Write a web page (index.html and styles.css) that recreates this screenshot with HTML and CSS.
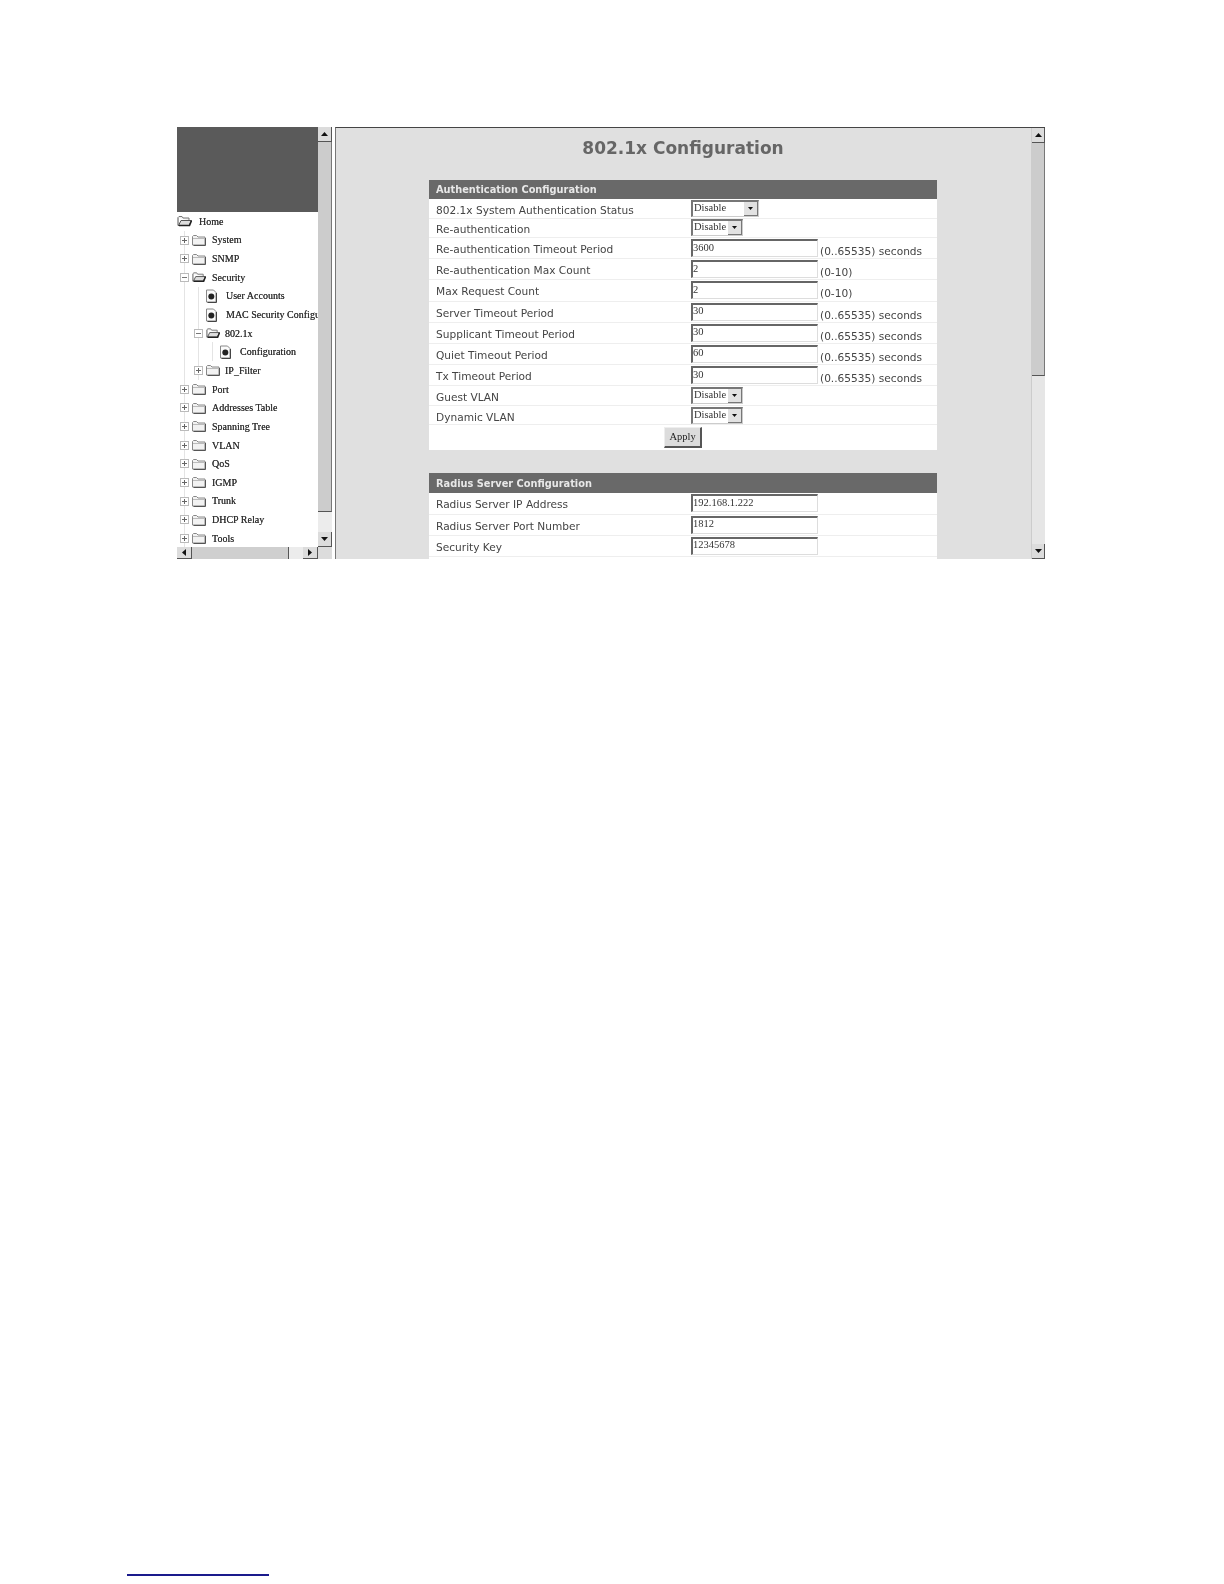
FILE: index.html
```html
<!DOCTYPE html>
<html>
	<head>
		<meta charset="UTF-8">
		<title>802.1x Configuration</title>
		<link rel="stylesheet" href="styles.css">
	</head>
	<body>
		<svg class="defs" xmlns="http://www.w3.org/2000/svg">
			<symbol id="folder" viewBox="0 0 14 12">
				<path d="M.5 2.500l1-1h3l1.500 1.500h7v8h-12.500z" fill="#f2f2f2" stroke="#888"/>
				<path d="M1 4.500h12" stroke="#bbb"/>
				<path d="M13.500 4v7.500h-12" fill="none" stroke="#555"/>
			</symbol>
			<symbol id="folder-open" viewBox="0 0 15 12">
				<path d="M1 2.500l1-1h3l1 1.500h6v2.500" fill="#eee" stroke="#777"/>
				<path d="M1 2.500v8h11l2.500-5h-10.500l-2.500 5" fill="#ddd" stroke="#555"/>
				<path d="M2 10.500h10.500l2-5" fill="none" stroke="#222" stroke-width="1.600"/>
			</symbol>
			<symbol id="page" viewBox="0 0 13 14">
				<path d="M1.500 1h7l2.500 2.500v9.500h-9.500z" fill="#fafafa" stroke="#888"/>
				<circle cx="6.300" cy="7.500" r="3" fill="#222"/>
				<path d="M11.500 4v9.500h-9" fill="none" stroke="#444"/>
			</symbol>
			<symbol id="plus" viewBox="0 0 9 9">
				<rect x=".5" y=".5" width="8" height="8" fill="#fff" stroke="#bbb"/>
				<path d="M2 4.500h5M4.500 2v5" stroke="#666"/>
			</symbol>
			<symbol id="minus" viewBox="0 0 9 9">
				<rect x=".5" y=".5" width="8" height="8" fill="#fff" stroke="#bbb"/>
				<path d="M2 4.500h5" stroke="#777"/>
			</symbol>
			<symbol id="arrow-up" viewBox="0 0 7 4"><path d="M3.500 0l3.500 4h-7z" fill="#111"/></symbol>
			<symbol id="arrow-down" viewBox="0 0 7 4"><path d="M0 0h7l-3.500 4z" fill="#111"/></symbol>
			<symbol id="arrow-left" viewBox="0 0 4 7"><path d="M4 0v7l-4-3.500z" fill="#111"/></symbol>
			<symbol id="arrow-right" viewBox="0 0 4 7"><path d="M0 0v7l4-3.500z" fill="#111"/></symbol>
		</svg>

		<div class="frame">
			<!--left-->
			<div class="left">
				<div class="left-top">
					<div class="left-main">
						<div class="banner"></div>
						<div class="tree">
							<div class="node"><svg class="ico-open home-ico"><use href="#folder-open"/></svg><span class="home-label">Home</span></div>
							<div class="node"><span class="cell line"><svg class="box"><use href="#plus"/></svg></span><svg class="ico"><use href="#folder"/></svg><span class="label">System</span></div>
							<div class="node"><span class="cell line"><svg class="box"><use href="#plus"/></svg></span><svg class="ico"><use href="#folder"/></svg><span class="label">SNMP</span></div>
							<div class="node"><span class="cell line"><svg class="box"><use href="#minus"/></svg></span><svg class="ico"><use href="#folder-open"/></svg><span class="label">Security</span></div>
							<div class="node"><span class="cell line"></span><span class="cell line"></span><svg class="doc"><use href="#page"/></svg><span class="label doc-label">User Accounts</span></div>
							<div class="node"><span class="cell line"></span><span class="cell line"></span><svg class="doc"><use href="#page"/></svg><span class="label doc-label">MAC Security Configuration</span></div>
							<div class="node"><span class="cell line"></span><span class="cell line"><svg class="box"><use href="#minus"/></svg></span><svg class="ico"><use href="#folder-open"/></svg><span class="label sub-label">802.1x</span></div>
							<div class="node"><span class="cell line"></span><span class="cell line"></span><span class="cell line"></span><svg class="doc"><use href="#page"/></svg><span class="label doc-label">Configuration</span></div>
							<div class="node"><span class="cell line"></span><span class="cell line"><svg class="box"><use href="#plus"/></svg></span><svg class="ico"><use href="#folder"/></svg><span class="label sub-label">IP_Filter</span></div>
							<div class="node"><span class="cell line"><svg class="box"><use href="#plus"/></svg></span><svg class="ico"><use href="#folder"/></svg><span class="label">Port</span></div>
							<div class="node"><span class="cell line"><svg class="box"><use href="#plus"/></svg></span><svg class="ico"><use href="#folder"/></svg><span class="label">Addresses Table</span></div>
							<div class="node"><span class="cell line"><svg class="box"><use href="#plus"/></svg></span><svg class="ico"><use href="#folder"/></svg><span class="label">Spanning Tree</span></div>
							<div class="node"><span class="cell line"><svg class="box"><use href="#plus"/></svg></span><svg class="ico"><use href="#folder"/></svg><span class="label">VLAN</span></div>
							<div class="node"><span class="cell line"><svg class="box"><use href="#plus"/></svg></span><svg class="ico"><use href="#folder"/></svg><span class="label">QoS</span></div>
							<div class="node"><span class="cell line"><svg class="box"><use href="#plus"/></svg></span><svg class="ico"><use href="#folder"/></svg><span class="label">IGMP</span></div>
							<div class="node"><span class="cell line"><svg class="box"><use href="#plus"/></svg></span><svg class="ico"><use href="#folder"/></svg><span class="label">Trunk</span></div>
							<div class="node"><span class="cell line"><svg class="box"><use href="#plus"/></svg></span><svg class="ico"><use href="#folder"/></svg><span class="label">DHCP Relay</span></div>
							<div class="node"><span class="cell line"><svg class="box"><use href="#plus"/></svg></span><svg class="ico"><use href="#folder"/></svg><span class="label">Tools</span></div>
						</div>
					</div>
					<div class="vbar vbar-left">
						<div class="sb-btn"><svg class="arrow-v"><use href="#arrow-up"/></svg></div>
						<div class="sb-thumb"></div>
						<div class="sb-track"></div>
						<div class="sb-btn"><svg class="arrow-v"><use href="#arrow-down"/></svg></div>
					</div>
				</div>
				<div class="hbar">
					<div class="sb-btn hbtn"><svg class="arrow-h"><use href="#arrow-left"/></svg></div>
					<div class="hthumb"></div>
					<div class="htrack"></div>
					<div class="sb-btn hbtn"><svg class="arrow-h"><use href="#arrow-right"/></svg></div>
					<div class="corner"></div>
				</div>
			</div>

			<!--right-->
			<div class="right">
				<div class="content">
					<div class="title">802.1x Configuration</div>

					<div class="section-head">Authentication Configuration</div>
					<div class="row row-s"><div class="name">802.1x System Authentication Status</div><div class="select wide"><span>Disable</span><span class="drop"><svg class="arrow-v"><use href="#arrow-down"/></svg></span></div></div>
					<div class="row row-s"><div class="name">Re-authentication</div><div class="select"><span>Disable</span><span class="drop"><svg class="arrow-v"><use href="#arrow-down"/></svg></span></div></div>
					<div class="row row-i"><div class="name">Re-authentication Timeout Period</div><input class="field" type="text" value="3600"><div class="hint">(0..65535) seconds</div></div>
					<div class="row row-i"><div class="name">Re-authentication Max Count</div><input class="field" type="text" value="2"><div class="hint">(0-10)</div></div>
					<div class="row row-i"><div class="name">Max Request Count</div><input class="field" type="text" value="2"><div class="hint">(0-10)</div></div>
					<div class="row row-i"><div class="name">Server Timeout Period</div><input class="field" type="text" value="30"><div class="hint">(0..65535) seconds</div></div>
					<div class="row row-i"><div class="name">Supplicant Timeout Period</div><input class="field" type="text" value="30"><div class="hint">(0..65535) seconds</div></div>
					<div class="row row-i"><div class="name">Quiet Timeout Period</div><input class="field" type="text" value="60"><div class="hint">(0..65535) seconds</div></div>
					<div class="row row-i"><div class="name">Tx Timeout Period</div><input class="field" type="text" value="30"><div class="hint">(0..65535) seconds</div></div>
					<div class="row row-s"><div class="name">Guest VLAN</div><div class="select"><span>Disable</span><span class="drop"><svg class="arrow-v"><use href="#arrow-down"/></svg></span></div></div>
					<div class="row row-s"><div class="name">Dynamic VLAN</div><div class="select"><span>Disable</span><span class="drop"><svg class="arrow-v"><use href="#arrow-down"/></svg></span></div></div>
					<div class="row-apply"><button class="apply" type="button">Apply</button></div>

					<div class="section-head second">Radius Server Configuration</div>
					<div class="row row-i"><div class="name">Radius Server IP Address</div><input class="field" type="text" value="192.168.1.222"></div>
					<div class="row row-i"><div class="name">Radius Server Port Number</div><input class="field" type="text" value="1812"></div>
					<div class="row row-i"><div class="name">Security Key</div><input class="field" type="text" value="12345678"></div>
					<div class="row-rest"></div>
				</div>
				<div class="vbar vbar-right">
					<div class="sb-btn"><svg class="arrow-v"><use href="#arrow-up"/></svg></div>
					<div class="sb-thumb"></div>
					<div class="sb-track"></div>
					<div class="sb-btn"><svg class="arrow-v"><use href="#arrow-down"/></svg></div>
				</div>
			</div>
		</div>

		<!--foot-->
		<div class="foot-rule"></div>
	</body>
</html>
```
FILE: styles.css
```css
body,div,span{
	margin: 0px;
	padding: 0px;
}
body{
	padding-top: 127px;
	background-color: #fff;
}
.defs{
	display: none;
}
.frame{
	margin-left: 177px;
	width: 868px;
	height: 432px;
	display: flex;
	filter: blur(0.6px);
	overflow: hidden;
}
/*left start*/
.left{
	width: 155px;
	flex: none;
	display: flex;
	flex-direction: column;
}
.left-top{
	height: 420px;
	display: flex;
}
.left-main{
	width: 141px;
	overflow: hidden;
}
.banner{
	height: 85px;
	background-color: #5a5a5a;
}
.tree{
	height: 335px;
	background-color: #fff;
	overflow: hidden;
}
.node{
	height: 18.65px;
	display: flex;
	align-items: center;
	white-space: nowrap;
	font-family: "Liberation Serif", serif;
	font-size: 10px;
	color: #333;
	text-shadow: 0 0 0.6px #333;
}
.cell{
	width: 14px;
	height: 100%;
	flex: none;
	position: relative;
}
.line::before{
	content: "";
	position: absolute;
	left: 7px;
	top: 0;
	bottom: 0;
	border-left: 1px solid #e4e4e4;
}
.box{
	position: absolute;
	left: 3px;
	top: 5px;
	width: 9px;
	height: 9px;
}
.ico{
	margin-left: 1px;
	width: 14px;
	height: 12px;
	flex: none;
}
.ico-open{
	width: 15px;
	height: 12px;
	flex: none;
}
.home-label{
	margin-left: 7px;
}
.label{
	margin-left: 6px;
}
.sub-label{
	margin-left: 5px;
}
.doc{
	width: 13px;
	height: 14px;
	flex: none;
}
.doc-label{
	margin-left: 8px;
}
/*left end*/

/*scrollbars*/
.vbar{
	width: 14px;
	flex: none;
	display: flex;
	flex-direction: column;
}
.vbar-left{
	background-color: #ececec;
}
.sb-btn{
	height: 15px;
	flex: none;
	background-color: #dcdcdc;
	border-right: 1px solid #555;
	border-bottom: 1px solid #555;
	box-sizing: border-box;
	display: flex;
	align-items: center;
	justify-content: center;
}
.arrow-v{
	width: 7px;
	height: 4px;
}
.arrow-h{
	width: 4px;
	height: 7px;
}
.sb-thumb{
	height: 370px;
	flex: none;
	background-color: #cccccc;
	border-bottom: 1px solid #555;
	border-right: 1px solid #777;
	box-sizing: border-box;
}
.sb-track{
	flex: 1;
}
.vbar-right{
	background-color: #e6e6e6;
	border-left: 1px solid #ccc;
	box-sizing: border-box;
}
.vbar-right .sb-thumb{
	height: 233px;
}
.hbar{
	height: 12px;
	flex: none;
	display: flex;
	background-color: #ececec;
	border-bottom: 1px solid #444;
}
.hbtn{
	width: 15px;
	height: auto;
}
.hthumb{
	width: 96px;
	background-color: #cfcfcf;
	border-right: 1px solid #555;
}
.htrack{
	flex: 1;
}
.hbar .hbtn:last-of-type{
	width: 11px;
}
.corner{
	width: 14px;
	flex: none;
	background-color: #dcdcdc;
}

/*right start*/
.right{
	margin-left: 3px;
	flex: 1;
	min-width: 0;
	display: flex;
	background-color: #e0e0e0;
	border-top: 1px solid #444;
	border-left: 1px solid #777;
	box-sizing: border-box;
}
.content{
	flex: 1;
	min-width: 0;
	padding-left: 93px;
	padding-right: 94px;
	overflow: hidden;
	font-family: "DejaVu Sans", sans-serif;
	font-size: 10.6px;
	color: #444;
}
.title{
	height: 52px;
	padding-top: 10px;
	box-sizing: border-box;
	text-align: center;
	font-size: 17px;
	font-weight: bold;
	color: #666;
}
.section-head{
	height: 19px;
	padding-left: 7px;
	line-height: 19px;
	font-size: 9.8px;
	font-weight: bold;
	color: #e8e8e8;
	background-color: #696969;
}
.second{
	margin-top: 23px;
	height: 20px;
	line-height: 21px;
}
.row{
	display: flex;
	background-color: #fff;
	border-bottom: 1px solid #eee;
	box-sizing: border-box;
}
.row-s{
	height: 19.6px;
	align-items: center;
}
.row-i{
	height: 21.15px;
	padding-top: 1px;
}
.name{
	padding-left: 7px;
	width: 262px;
	box-sizing: border-box;
	flex: none;
	line-height: 21px;
	white-space: nowrap;
}
.row-s .name{
	padding-top: 3px;
	line-height: 18px;
}
.second ~ .row .name{
	line-height: 20px;
}
.select{
	width: 52px;
	height: 17px;
	flex: none;
	box-sizing: border-box;
	display: flex;
	justify-content: space-between;
	padding-left: 1px;
	font-family: "Liberation Serif", serif;
	font-size: 10.5px;
	line-height: 11px;
	color: #333;
	background-color: #fff;
	border: 1px solid #777;
	border-left-width: 2px;
	border-top-width: 2px;
	border-right-color: #ccc;
	border-bottom-color: #ccc;
}
.wide{
	width: 68px;
}
.drop{
	width: 13px;
	flex: none;
	display: flex;
	align-items: center;
	justify-content: center;
	background-color: #e2e2e2;
	border-right: 1px solid #777;
	border-bottom: 1px solid #777;
}
.drop .arrow-v{
	width: 5px;
	height: 3px;
}
.field{
	margin: 0;
	padding: 0 0 3px 0;
	width: 127px;
	height: 18px;
	flex: none;
	box-sizing: border-box;
	font-family: "Liberation Serif", serif;
	font-size: 10.5px;
	color: #333;
	background-color: #fff;
	border-style: solid;
	border-width: 2px 1px 1px 2px;
	border-color: #666 #ddd #ddd #666;
	outline: none;
}
.hint{
	margin-left: 2px;
	padding-top: 4px;
	line-height: 16px;
	white-space: nowrap;
}
.row-apply{
	height: 25px;
	display: flex;
	justify-content: center;
	align-items: flex-start;
	padding-top: 2px;
	box-sizing: border-box;
	background-color: #fff;
}
.apply{
	margin: 0;
	padding: 0 0 2px 0;
	width: 38px;
	height: 21px;
	font-family: "Liberation Serif", serif;
	font-size: 10.5px;
	color: #222;
	background-color: #dcdcdc;
	border-style: solid;
	border-width: 1px 2px 2px 1px;
	border-color: #eee #555 #555 #eee;
}
.row-rest{
	height: 12px;
	background-color: #fff;
}
/*right end*/

.foot-rule{
	margin-top: 1015px;
	margin-left: 127px;
	width: 142px;
	height: 2px;
	background-color: #1a1a8c;
}
```
